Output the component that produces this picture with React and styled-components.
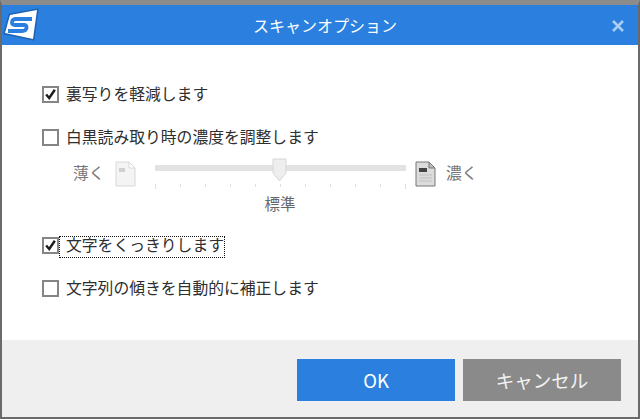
import React from 'react';
import styled, {createGlobalStyle} from 'styled-components';

const Global = createGlobalStyle`
  html, body { margin: 0; padding: 0; background: #fff; }
  body { font-family: "Noto Sans CJK JP", "Liberation Sans", sans-serif; }
`;

const Dialog = styled.div`
  box-sizing: border-box;
  width: 640px;
  height: 419px;
  display: flex;
  flex-direction: column;
  border: 2px solid #6a6a6a;
  border-top: 5px solid #8c8c8c;
  background: #fff;
`;

const TitleBar = styled.div`
  height: 40px;
  flex: none;
  background: #2b7fde;
  display: flex;
  align-items: center;
  position: relative;
`;

const Logo = styled.svg`
  position: absolute;
  left: 0;
  top: 0;
  overflow: visible;
`;

const Title = styled.div`
  flex: 1;
  text-align: center;
  color: #fff;
  font-size: 16px;
  padding-left: 10px;
`;

const Close = styled.svg`
  position: absolute;
  right: 13px;
  top: 14px;
`;

const Body = styled.div`
  flex: 1;
  padding: 39px 0 0 40px;
  display: flex;
  flex-direction: column;
`;

const Row = styled.div`
  height: 20px;
  display: flex;
  align-items: center;
  margin-bottom: ${p => p.$gap}px;
`;

const Box = styled.div`
  box-sizing: border-box;
  width: 17px;
  height: 17px;
  border: 2px solid #858585;
  background: #fff;
  display: flex;
  align-items: center;
  justify-content: center;
  flex: none;
`;

const Label = styled.span`
  margin-left: 7px;
  font-size: 15.8px;
  line-height: 20px;
  color: #2e2e2e;
  white-space: nowrap;
  position: relative;
  ${p => p.$focus && `
    &::after {
      content: "";
      position: absolute;
      left: -7px;
      right: -1px;
      top: 1px;
      bottom: -3px;
      border: 1px dotted #111;
    }
  `}
`;

const Density = styled.div`
  display: flex;
  align-items: flex-start;
  margin: 8px 0 0 31px;
  height: 80px;
`;

const Side = styled.span`
  font-size: 15.8px;
  line-height: 22px;
  color: #777;
  width: 42px;
  flex: none;
  margin-top: 7px;
  ${p => p.$right && 'margin-left: 10px;'}
`;

const PageIcon = styled.svg`
  flex: none;
  margin-top: 6px;
`;

const Slider = styled.div`
  width: 251px;
  flex: none;
  margin: 0 9px 0 19px;
  position: relative;
  padding-top: 10px;
`;

const Track = styled.div`
  height: 6px;
  background: #e3e3e3;
`;

const Ticks = styled.div`
  display: flex;
  justify-content: space-between;
  margin-top: 13px;
  height: 5px;
`;

const Tick = styled.i`
  width: 1px;
  height: ${p => (p.$end ? 5 : 3)}px;
  background: #dedede;
`;

const Thumb = styled.svg`
  position: absolute;
  left: 117px;
  top: 3px;
`;

const Standard = styled.div`
  text-align: center;
  font-size: 15.5px;
  line-height: 20px;
  color: #666;
  margin-top: 4px;
  padding-right: 1px;
`;

const Footer = styled.div`
  height: 77px;
  flex: none;
  background: #f0efef;
  display: flex;
  justify-content: flex-end;
  align-items: flex-start;
  gap: 8px;
  padding: 19px 17px 0 0;
  box-sizing: border-box;
`;

const Button = styled.div`
  width: 158px;
  height: 42px;
  background: ${p => p.$bg};
  color: ${p => p.$fg};
  font-size: 18.5px;
  display: flex;
  align-items: center;
  justify-content: center;
`;

const Check = () => (
  <svg width="15" height="15" viewBox="0 0 15 15">
    <path d="M2.500 7.500 L6 11.500 L12.500 2" fill="none" stroke="#1c1c1c" strokeWidth="2.800" />
  </svg>
);

const Page = ({dark}) => (
  <PageIcon width="21" height="26" viewBox="0 0 21 26">
    <path d="M1 1 H14 L20 7 V25 H1 Z" fill={dark ? '#dcdcdc' : '#f4f4f4'} stroke={dark ? '#777' : '#d8d8d8'} />
    <path d="M14 1 V7 H20 Z" fill={dark ? '#bbb' : '#fff'} stroke={dark ? '#777' : '#d8d8d8'} />
    <rect x="4" y="7" width={dark ? 8 : 6} height="4" fill={dark ? '#444' : '#d0d0d0'} />
    {dark && <path d="M4 14 H17 M4 17 H17 M4 20 H17" stroke="#c0c0c0" />}
  </PageIcon>
);

const ticks = [0, 1, 2, 3, 4, 5, 6, 7, 8, 9, 10];

const App = () => (
  <>
    <Global />
    <Dialog>
      <TitleBar>
        <Logo width="40" height="40" viewBox="0 0 40 40">
          <path d="M8 10 L35 5 L31 34 L3 28 Z" fill="#1d62b4" stroke="#1d62b4" strokeWidth="3" />
          <path d="M8 10 L35 5 L31 34 L3 28 Z" fill="#fff" />
          <path d="M30 14 H14 Q10.500 14 10 17 Q9.500 20 13 20 H22 Q25 20 24.500 23 Q24 26 20 26 H6" fill="none" stroke="#2b7fde" strokeWidth="3.800" />
        </Logo>
        <Title>スキャンオプション</Title>
        <Close width="14" height="14" viewBox="0 0 14 14">
          <path d="M2 2 L12 12 M12 2 L2 12" stroke="#a9cdf3" strokeWidth="2.600" />
        </Close>
      </TitleBar>
      <Body>
        <Row $gap={23}>
          <Box><Check /></Box>
          <Label>裏写りを軽減します</Label>
        </Row>
        <Row>
          <Box />
          <Label>白黒読み取り時の濃度を調整します</Label>
        </Row>
        <Density>
          <Side>薄く</Side>
          <Page />
          <Slider>
            <Track />
            <Thumb width="15" height="24" viewBox="0 0 15 24">
              <path d="M1 1 H14 V15 L7.500 23 L1 15 Z" fill="#eee" stroke="#d6d6d6" />
            </Thumb>
            <Ticks>
              {ticks.map(t => <Tick key={t} $end={t === 0 || t === 10} />)}
            </Ticks>
            <Standard>標準</Standard>
          </Slider>
          <Page dark />
          <Side $right>濃く</Side>
        </Density>
        <Row $gap={23}>
          <Box><Check /></Box>
          <Label $focus>文字をくっきりします</Label>
        </Row>
        <Row>
          <Box />
          <Label>文字列の傾きを自動的に補正します</Label>
        </Row>
      </Body>
      <Footer>
        <Button $bg="#2b7fde" $fg="#fff">OK</Button>
        <Button $bg="#8a8a8a" $fg="#f2f2f2">キャンセル</Button>
      </Footer>
    </Dialog>
  </>
);

export default App;
